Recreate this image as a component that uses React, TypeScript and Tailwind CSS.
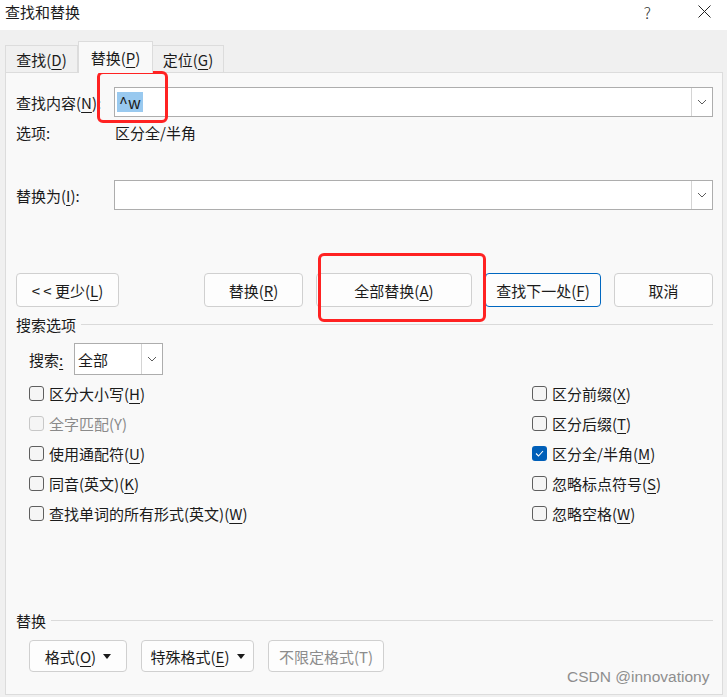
import React from "react";

const font = { fontFamily: '"Noto Sans CJK SC", "Noto Sans", sans-serif' };

function U({ children }: { children: React.ReactNode }) {
  return <span className="underline underline-offset-[3px] decoration-1">{children}</span>;
}

function Chevron() {
  return (
    <svg width="10" height="6" viewBox="0 0 10 6" fill="none">
      <path d="M1 1 L5 5 L9 1" stroke="#5c5c5c" strokeWidth="1" />
    </svg>
  );
}

function Caret() {
  return (
    <svg className="ml-[7px]" width="8" height="5" viewBox="0 0 8 5">
      <path d="M0 0 L8 0 L4 5 Z" fill="#1b1b1b" />
    </svg>
  );
}

function Combo({ children }: { children?: React.ReactNode }) {
  return (
    <div className="flex-1 h-[30px] flex items-center bg-white border border-[#adadad]">
      <div className="flex-1 pl-[2px] flex items-center">{children}</div>
      <div className="w-[20px] h-[28px] mr-px border-l border-[#d4d4d4] flex items-center justify-center">
        <Chevron />
      </div>
    </div>
  );
}

function Btn({
  children,
  w,
  primary,
  disabled,
}: {
  children: React.ReactNode;
  w: string;
  primary?: boolean;
  disabled?: boolean;
}) {
  return (
    <div
      className={`${w} h-full flex items-center justify-center whitespace-nowrap rounded-[4px] border bg-[#fdfdfd] ${
        primary ? "border-[#0067c0]" : "border-[#d0d0d0]"
      } ${disabled ? "text-[#8c8c8c]" : "text-[#1b1b1b]"}`}
    >
      {children}
    </div>
  );
}

function Check({ label, checked, disabled }: { label: React.ReactNode; checked?: boolean; disabled?: boolean }) {
  return (
    <div className="h-[30px] flex items-center">
      {checked ? (
        <div className="w-[15px] h-[15px] rounded-[3px] bg-[#005fb8] flex items-center justify-center">
          <svg width="9" height="7" viewBox="0 0 9 7" fill="none">
            <path d="M1 3.5 L3.5 6 L8 1" stroke="white" strokeWidth="1.1" />
          </svg>
        </div>
      ) : (
        <div
          className={`w-[15px] h-[15px] rounded-[3px] border bg-[#f5f5f5] ${
            disabled ? "border-[#c8c8c8]" : "border-[#5f5f5f]"
          }`}
        />
      )}
      <span className={`ml-[5px] whitespace-nowrap ${disabled ? "text-[#8a8a8a]" : ""}`}>{label}</span>
    </div>
  );
}

function Legend({ children }: { children: React.ReactNode }) {
  return (
    <div className="h-[20px] flex items-center">
      <span>{children}</span>
      <div className="flex-1 ml-[5px] h-px bg-[#dadada]" />
    </div>
  );
}

export default function App() {
  return (
    <div
      className="relative w-[727px] h-[697px] bg-[#f0f0f0] text-[15px] leading-none text-[#1b1b1b] overflow-hidden"
      style={font}
    >
      {/* title bar */}
      <div className="h-[30px] bg-white flex items-center">
        <span className="ml-[5px] -mt-[7px]">查找和替换</span>
        <span className="ml-auto -mt-[7px] text-[16px] font-light text-[#333]">?</span>
        <svg className="ml-[47px] mr-[16px] -mt-[7px]" width="13" height="13" viewBox="0 0 13 13">
          <path d="M0.5 0.5 L12.5 12.5 M12.5 0.5 L0.5 12.5" stroke="#222" strokeWidth="1" />
        </svg>
      </div>

      {/* tabs */}
      <div className="mt-[11px] ml-[5px] flex items-end h-[31px]">
        <div className="w-[73px] h-[27px] flex items-center justify-center border border-b-0 border-[#dcdcdc] bg-[#f0f0f0]">
          查找(<U>D</U>)
        </div>
        <div className="relative z-10 w-[75px] h-[32px] -mb-px flex items-center justify-center border border-b-0 border-[#dcdcdc] bg-[#f9f9f9]">
          替换(<U>P</U>)
        </div>
        <div className="w-[71px] h-[27px] flex items-center justify-center border border-b-0 border-l-0 border-[#dcdcdc] bg-[#f0f0f0]">
          定位(<U>G</U>)
        </div>
      </div>

      {/* panel */}
      <div className="ml-[5px] w-[718px] h-[623px] border border-[#dcdcdc] bg-[#f9f9f9] pl-[10px] pr-[9px] flex flex-col">
        <div className="mt-[14px] h-[30px] flex items-center">
          <div className="w-[98px] whitespace-nowrap">
            查找内容(<U>N</U>):
          </div>
          <Combo>
            <span className="px-[2px] h-[20px] flex items-center bg-[#99c9ef] text-[16px]">^w</span>
          </Combo>
        </div>

        <div className="mt-[5px] h-[20px] flex items-center">
          <div className="w-[99px]">选项:</div>
          <span>区分全/半角</span>
        </div>

        <div className="mt-[38px] h-[30px] flex items-center">
          <div className="w-[98px] whitespace-nowrap">
            替换为(<U>I</U>):
          </div>
          <Combo />
        </div>

        <div className="mt-[63px] h-[34px] flex">
          <Btn w="w-[103px]">
            &lt; &lt; 更少(<U>L</U>)
          </Btn>
          <div className="ml-auto flex gap-[13px] h-full">
            <Btn w="w-[99px]">
              替换(<U>R</U>)
            </Btn>
            <Btn w="w-[156px]">
              全部替换(<U>A</U>)
            </Btn>
            <Btn w="w-[116px]" primary>
              查找下一处(<U>F</U>)
            </Btn>
            <Btn w="w-[99px]">取消</Btn>
          </div>
        </div>

        <div className="mt-[7px]">
          <Legend>搜索选项</Legend>
        </div>

        <div className="mt-[9px] ml-[13px] h-[32px] flex items-center">
          <span className="w-[45px]">
            搜索<U>:</U>
          </span>
          <div className="w-[89px] h-full flex items-center bg-white border border-[#adadad]">
            <span className="flex-1 pl-[3px]">全部</span>
            <div className="w-[20px] h-[30px] mr-px border-l border-[#d4d4d4] flex items-center justify-center">
              <Chevron />
            </div>
          </div>
        </div>

        <div className="mt-[3px] ml-[13px] grid grid-cols-[503px_1fr]">
          <div className="flex flex-col">
            <Check label={<>区分大小写(<U>H</U>)</>} />
            <Check label="全字匹配(Y)" disabled />
            <Check label={<>使用通配符(<U>U</U>)</>} />
            <Check label={<>同音(英文)(<U>K</U>)</>} />
            <Check label={<>查找单词的所有形式(英文)(<U>W</U>)</>} />
          </div>
          <div className="flex flex-col">
            <Check label={<>区分前缀(<U>X</U>)</>} />
            <Check label={<>区分后缀(<U>T</U>)</>} />
            <Check label={<>区分全/半角(<U>M</U>)</>} checked />
            <Check label={<>忽略标点符号(<U>S</U>)</>} />
            <Check label={<>忽略空格(<U>W</U>)</>} />
          </div>
        </div>

        <div className="mt-[82px]">
          <Legend>替换</Legend>
        </div>

        <div className="mt-[10px] ml-[13px] h-[32px] flex gap-[14px]">
          <Btn w="w-[98px]">
            格式(<U>O</U>)
            <Caret />
          </Btn>
          <Btn w="w-[113px]">
            特殊格式(<U>E</U>)
            <Caret />
          </Btn>
          <Btn w="w-[116px]" disabled>
            不限定格式(T)
          </Btn>
        </div>
      </div>

      {/* watermark */}
      <div
        className="absolute left-[567px] top-[669px] text-[15.5px] text-[#8e8e8e]"
        style={{ fontFamily: '"Liberation Sans", Arial, sans-serif' }}
      >
        CSDN @innovationy
      </div>

      {/* red annotation boxes */}
      <div className="absolute left-[97px] top-[71px] w-[71px] h-[52px] border-[3px] border-[#ff2222] rounded-[6px]" />
      <div className="absolute left-[318px] top-[253px] w-[168px] h-[69px] border-[3px] border-[#ff2222] rounded-[6px]" />
    </div>
  );
}
